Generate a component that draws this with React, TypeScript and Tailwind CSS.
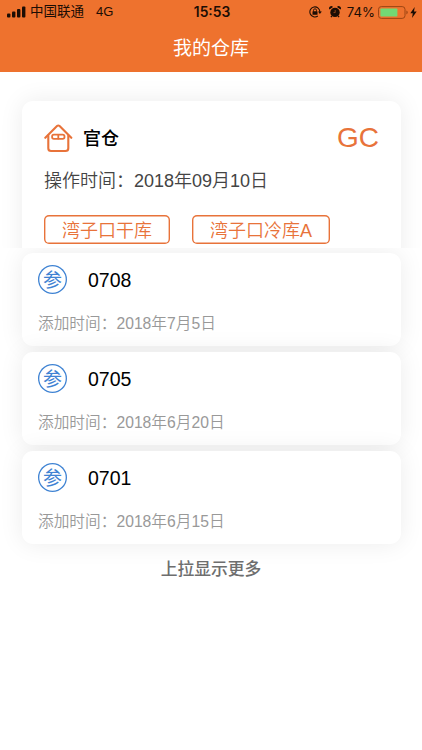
import { ReactNode } from "react";

type RecordItem = {
    code: string;
    date: string;
};

const records: RecordItem[] = [
    { code: "0708", date: "2018年7月5日" },
    { code: "0705", date: "2018年6月20日" },
    { code: "0701", date: "2018年6月15日" },
];

function SignalIcon() {
    return (
        <svg width="19" height="12" viewBox="0 0 19 12" fill="#1c0d04">
            <rect x="0" y="7.5" width="3.4" height="4" rx="1" />
            <rect x="5" y="5.5" width="3.4" height="6" rx="1" />
            <rect x="10" y="3" width="3.4" height="8.5" rx="1" />
            <rect x="15" y="0.5" width="3.4" height="11" rx="1" />
        </svg>
    );
}

function RotationLockIcon() {
    return (
        <svg width="13" height="12" viewBox="0 0 13 12" fill="none" stroke="#1c0d04">
            <path d="M8.8 10A5 5 0 1 1 10.9 6" strokeWidth="1.1" />
            <path d="M9 5.6h3.8L10.9 8z" fill="#1c0d04" stroke="none" />
            <rect x="3.5" y="5.3" width="5" height="3.5" rx="0.4" fill="#1c0d04" stroke="none" />
            <path d="M4.5 5.6V4.3a1.5 1.5 0 0 1 3 0v1.3" strokeWidth="0.9" />
        </svg>
    );
}

function AlarmIcon() {
    return (
        <svg width="12" height="12" viewBox="0 0 12 12" fill="#1c0d04">
            <circle cx="6" cy="6.4" r="4.7" />
            <path d="M0.5 3.6A2.1 2.1 0 0 1 4 1.1zM11.5 3.6A2.1 2.1 0 0 0 8 1.1zM2.2 9.4l1.2 1.1-1 1.1-.9-.8zM9.8 9.4l-1.2 1.1 1 1.1.9-.8z" />
            <path d="M6.2 4v2.6H4.5" fill="none" stroke="#b85822" strokeWidth="0.7" />
        </svg>
    );
}

function BatteryIcon() {
    return (
        <svg width="31" height="13" viewBox="0 0 31 13">
            <rect x="0.5" y="0.6" width="26.5" height="11.8" rx="2.8" fill="none" stroke="#9c4513" />
            <rect x="2.4" y="2.4" width="17" height="8.2" rx="0.8" fill="#72d974" />
            <path d="M28.4 4.6c1.8.6 1.8 3.2 0 3.8z" fill="#9c4513" />
        </svg>
    );
}

function BoltIcon() {
    return (
        <svg width="7" height="11" viewBox="0 0 7 11" fill="#1c0d04">
            <path d="M4.7 0L0.3 6.2h2.5L2 11l4.7-6.5H4z" />
        </svg>
    );
}

function HouseIcon() {
    return (
        <svg
            width="30"
            height="30"
            viewBox="0 0 30 30"
            fill="none"
            stroke="#e8733a"
            strokeWidth="2.1"
            strokeLinecap="round"
            strokeLinejoin="round"
        >
            <path d="M1.3 14.8L13 3.1q1.3-1.2 2.6 0l11.7 11.7" />
            <path d="M4.3 12.6v12.6q0 2.8 2.8 2.8h14.4q2.8 0 2.8-2.8V12.6" />
            <rect x="8.1" y="11.6" width="12.4" height="4.2" rx="1.8" strokeWidth="1.8" />
            <path d="M14.3 11.8v3.8" strokeWidth="1.8" />
        </svg>
    );
}

function Tag({ children }: { children: ReactNode }) {
    return (
        <span className="h-[29px] rounded-[5px] px-[18px] text-[18px] leading-[32px] font-[350] text-[#e8733a] ring-[1.4px] ring-[#e8733a] ring-inset">
            {children}
        </span>
    );
}

function App() {
    return (
        <div className="h-[750px] overflow-hidden bg-white font-['Liberation_Sans','Noto_Sans_CJK_SC',sans-serif]">
            <header className="h-[72px] bg-[#ee722e]">
                <div className="grid h-6 grid-cols-3 items-center pr-[5px] pl-[7px] text-[#1c0d04]">
                    <div className="flex items-center text-[13.5px] leading-6">
                        <SignalIcon />
                        <span className="ml-1">中国联通</span>
                        <span className="ml-3 text-[13px]">4G</span>
                    </div>
                    <div className="text-center font-['Inter',sans-serif] text-[13.8px] font-semibold">15:53</div>
                    <div className="flex items-center justify-end">
                        <RotationLockIcon />
                        <span className="ml-[7px] flex">
                            <AlarmIcon />
                        </span>
                        <span className="mr-[3px] ml-[6px] font-['Inter',sans-serif] text-[13.2px] leading-6">74%</span>
                        <BatteryIcon />
                        <span className="ml-[1px]">
                            <BoltIcon />
                        </span>
                    </div>
                </div>
                <h1 className="text-center text-[19px] leading-[49px] text-white">我的仓库</h1>
            </header>

            <section className="h-[176px] overflow-hidden px-[22px] pt-[29px]">
                <div className="h-[170px] w-[379px] rounded-[11px] bg-white px-[22px] pt-[21px] shadow-[0_0_24px_rgba(0,0,0,0.08)]">
                    <div className="flex h-[32px] items-center">
                        <HouseIcon />
                        <span className="ml-[9px] pt-[2px] text-[18px] leading-[30px] font-medium text-black">官仓</span>
                        <span className="ml-auto text-[28px] leading-[30px] text-[#e8733a]">GC</span>
                    </div>
                    <p className="mt-[13px] text-[18px] leading-[28px] font-[350] text-[#444]">
                        操作时间：2018年09月10日
                    </p>
                    <div className="mt-[20px] flex gap-[22px]">
                        <Tag>湾子口干库</Tag>
                        <Tag>湾子口冷库A</Tag>
                    </div>
                </div>
            </section>

            <section className="overflow-hidden px-[22px] pt-[5px] pb-6">
                <ul className="space-y-[6px]">
                    {records.map((item) => (
                        <li
                            key={item.code}
                            className="h-[93px] w-[379px] rounded-[11px] bg-white px-4 pt-3 shadow-[0_0_24px_rgba(0,0,0,0.08)]"
                        >
                            <div className="flex items-center">
                                <span className="flex h-[29px] w-[29px] items-center justify-center rounded-full pt-[2px] text-[19px] leading-none text-[#3f83d3] ring-[1.3px] ring-[#3f83d3] ring-inset">
                                    参
                                </span>
                                <span className="ml-[21px] pt-px text-[19.5px] leading-[26px] text-black">{item.code}</span>
                            </div>
                            <p className="mt-[18px] text-[15.7px] leading-6 font-[350] text-[#999]">
                                添加时间：{item.date}
                            </p>
                        </li>
                    ))}
                </ul>
                <p className="mt-[14px] text-center text-[16.8px] leading-6 font-medium text-[#6e6e6e]">
                    上拉显示更多
                </p>
            </section>
        </div>
    );
}

export default App;
